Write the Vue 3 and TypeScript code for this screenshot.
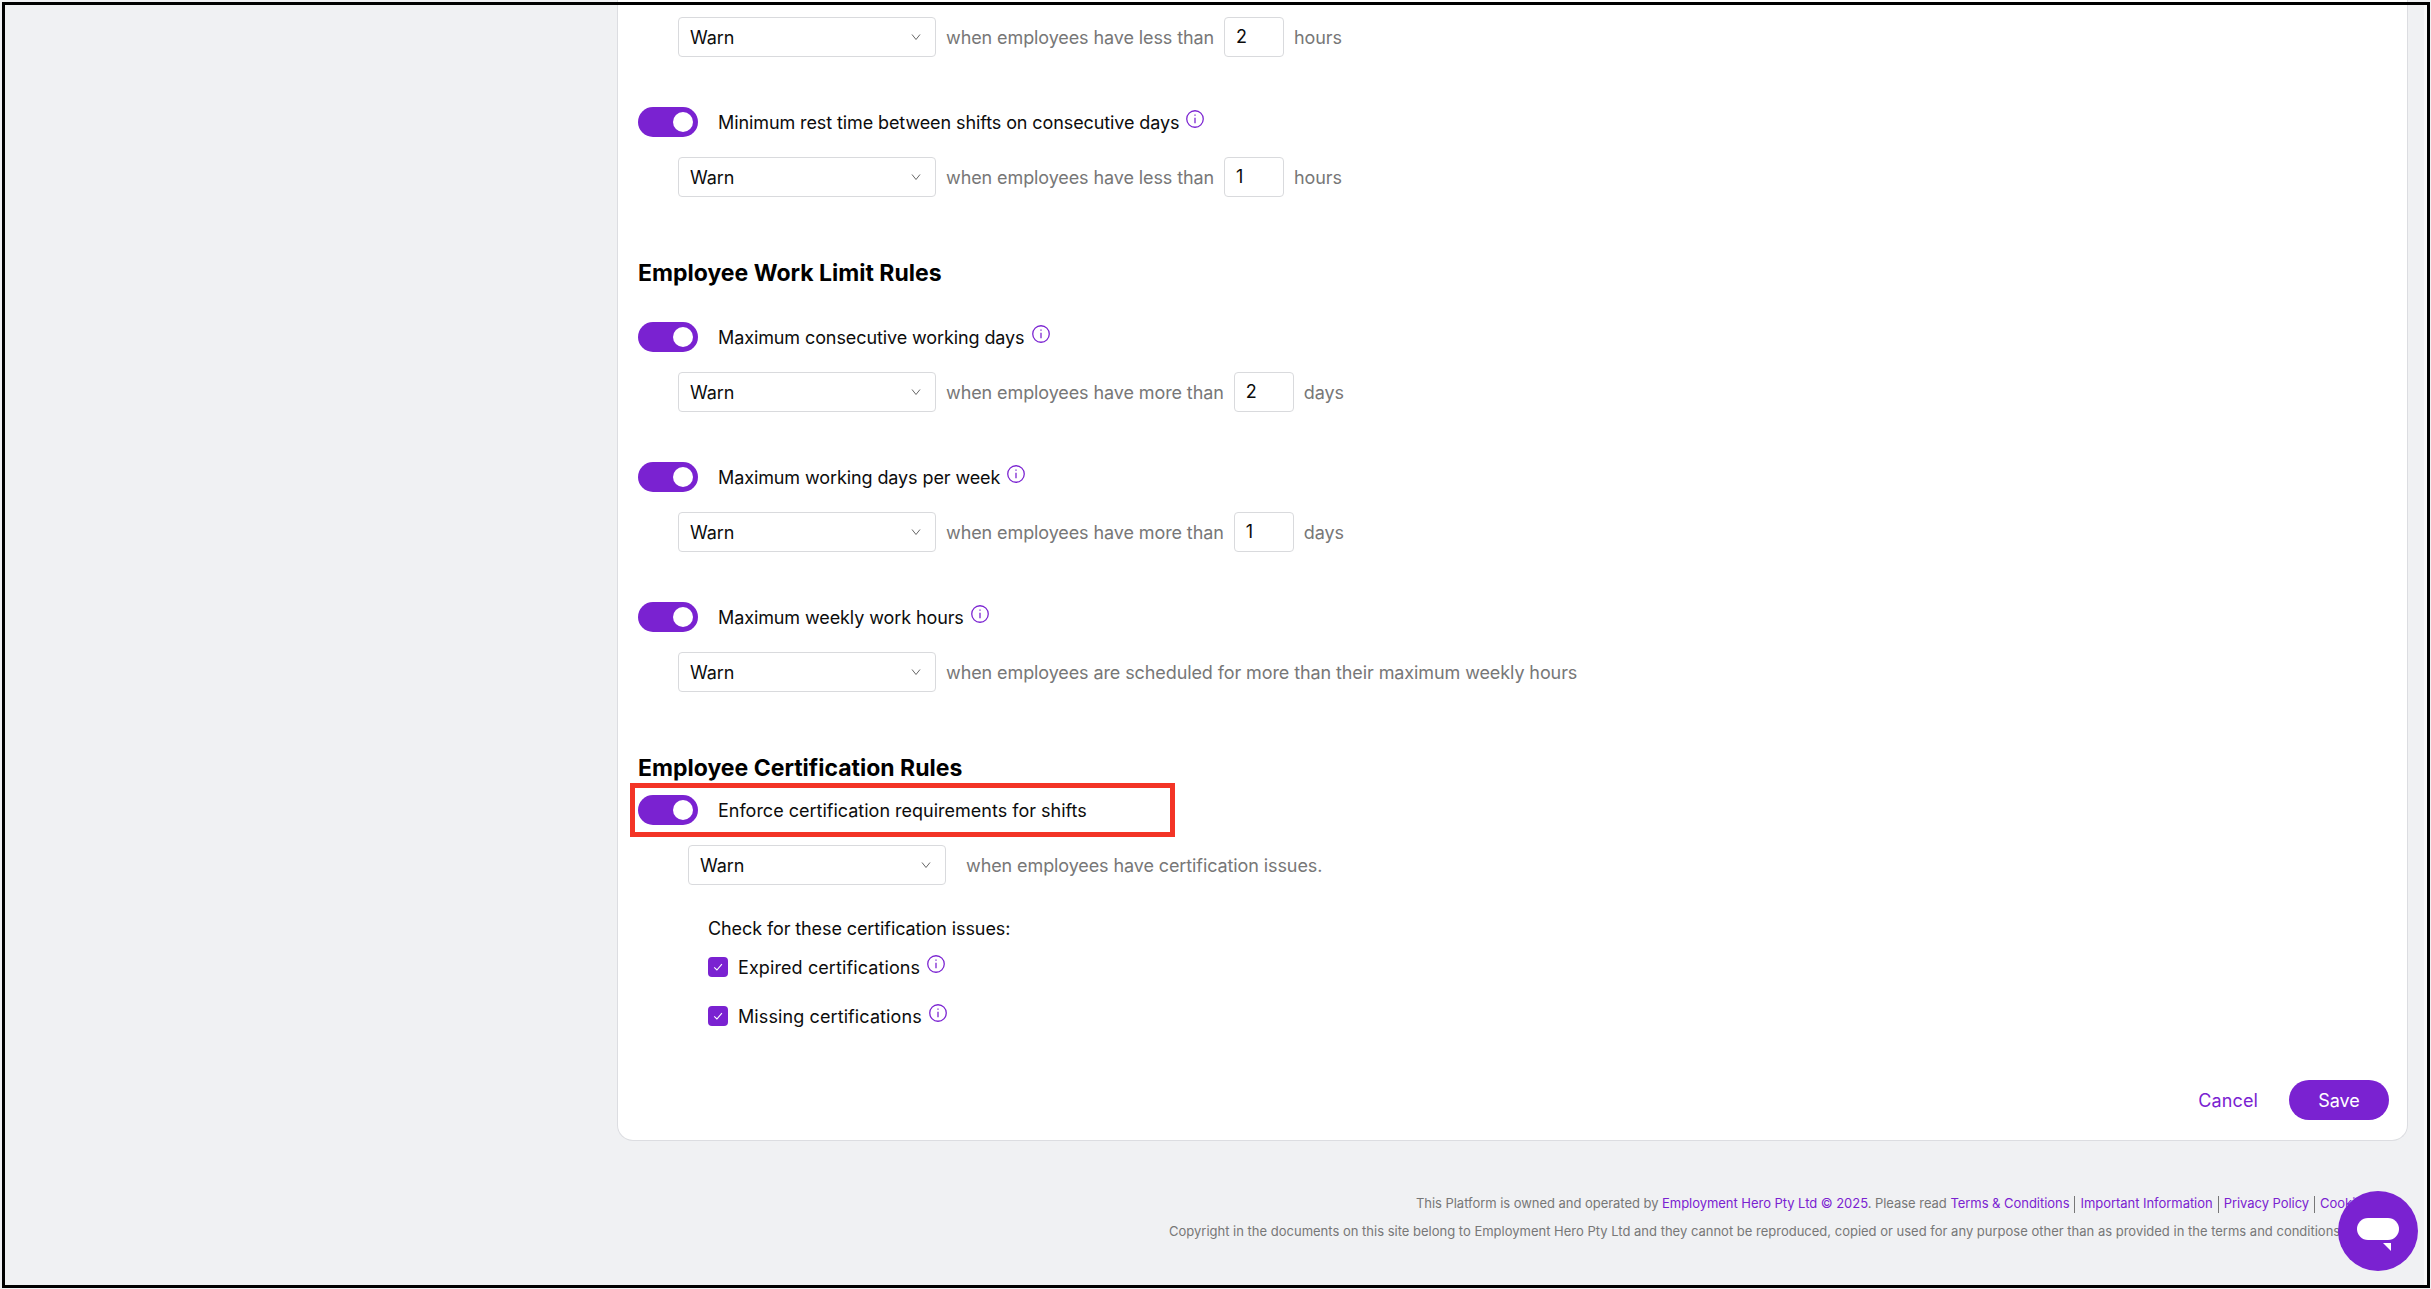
<script setup lang="ts">
interface Rule {
  label: string
  condition: string
  value?: string
  unit?: string
}

const workLimitRules: Rule[] = [
  { label: 'Maximum consecutive working days', condition: 'when employees have more than', value: '2', unit: 'days' },
  { label: 'Maximum working days per week', condition: 'when employees have more than', value: '1', unit: 'days' },
  { label: 'Maximum weekly work hours', condition: 'when employees are scheduled for more than their maximum weekly hours' }
]

const certChecks = ['Expired certifications', 'Missing certifications']
</script>

<template>
  <div class="page">
    <main class="card">
      <div class="action-row first-row">
        <div class="select"><span>Warn</span><svg class="chevron" viewBox="0 0 10 8"><path d="M1 1.5 5 6.5 9 1.5" /></svg></div>
        <span class="condition">when employees have less than</span>
        <div class="number">2</div>
        <span class="condition">hours</span>
      </div>

      <div class="rule">
        <div class="toggle-row">
          <span class="toggle"><i></i></span>
          <span class="rule-label">Minimum rest time between shifts on consecutive days</span>
          <svg class="info" viewBox="0 0 17 17"><circle cx="8.5" cy="8.5" r="7.8" /><path d="M8.5 7.3v5.2M8.5 4.2v1.3" /></svg>
        </div>
        <div class="action-row">
          <div class="select"><span>Warn</span><svg class="chevron" viewBox="0 0 10 8"><path d="M1 1.5 5 6.5 9 1.5" /></svg></div>
          <span class="condition">when employees have less than</span>
          <div class="number">1</div>
          <span class="condition">hours</span>
        </div>
      </div>

      <h2 class="section-title">Employee Work Limit Rules</h2>
      <div v-for="rule in workLimitRules" :key="rule.label" class="rule limit-rule">
        <div class="toggle-row">
          <span class="toggle"><i></i></span>
          <span class="rule-label">{{ rule.label }}</span>
          <svg class="info" viewBox="0 0 17 17"><circle cx="8.5" cy="8.5" r="7.8" /><path d="M8.5 7.3v5.2M8.5 4.2v1.3" /></svg>
        </div>
        <div class="action-row">
          <div class="select"><span>Warn</span><svg class="chevron" viewBox="0 0 10 8"><path d="M1 1.5 5 6.5 9 1.5" /></svg></div>
          <span class="condition">{{ rule.condition }}</span>
          <div v-if="rule.value" class="number">{{ rule.value }}</div>
          <span v-if="rule.unit" class="condition">{{ rule.unit }}</span>
        </div>
      </div>

      <h2 class="section-title cert-title">Employee Certification Rules</h2>
      <div class="toggle-row cert-toggle">
        <span class="toggle"><i></i></span>
        <span class="rule-label">Enforce certification requirements for shifts</span>
        <div class="highlight"></div>
      </div>
      <div class="action-row cert-action">
        <div class="select"><span>Warn</span><svg class="chevron" viewBox="0 0 10 8"><path d="M1 1.5 5 6.5 9 1.5" /></svg></div>
        <span class="condition">when employees have certification issues.</span>
      </div>
      <div class="cert-checks">
        <p class="checks-title">Check for these certification issues:</p>
        <div v-for="check in certChecks" :key="check" class="check-row">
          <span class="checkbox"><svg viewBox="0 0 20 20"><path d="M6.2 10.4 8.9 13 13.9 7.2" /></svg></span>
          <span class="rule-label">{{ check }}</span>
          <svg class="info" viewBox="0 0 17 17"><circle cx="8.5" cy="8.5" r="7.8" /><path d="M8.5 7.3v5.2M8.5 4.2v1.3" /></svg>
        </div>
      </div>

      <div class="card-actions">
        <a class="cancel">Cancel</a>
        <button class="save">Save</button>
      </div>
    </main>

    <footer class="footer">
      <p class="legal">This Platform is owned and operated by <a>Employment Hero Pty Ltd © 2025</a>. Please read <a>Terms &amp; Conditions</a><span class="sep"></span><a>Important Information</a><span class="sep"></span><a>Privacy Policy</a><span class="sep"></span><a>Cookie Policy</a></p>
      <p class="copyright">Copyright in the documents on this site belong to Employment Hero Pty Ltd and they cannot be reproduced, copied or used for any purpose other than as provided in the terms and conditions of use.</p>
    </footer>

    <div class="chat">
      <span class="bubble"></span>
      <span class="tail"></span>
    </div>
    <div class="frame"></div>
  </div>
</template>

<style scoped>
.page {
  position: relative;
  width: 2431px;
  height: 1289px;
  overflow: hidden;
  background: #f0f1f3;
  font-family: Inter, "Open Sans", sans-serif;
  font-size: 18px;
  letter-spacing: -0.1px;
  color: #0c0c0c;
}

.card {
  box-sizing: border-box;
  margin-left: 617px;
  width: 1791px;
  height: 1141px;
  padding: 17px 20px 0;
  background: #fff;
  border: 1px solid #dcdde1;
  border-top: none;
  border-radius: 0 0 16px 16px;
  position: relative;
}

.rule {
  margin-top: 50px;
}

.section-title {
  margin: 61px 0 0;
  font-size: 23px;
  line-height: 30px;
  font-weight: 700;
  letter-spacing: 0;
  color: #000;
}

.limit-rule:nth-of-type(n) {
  margin-top: 50px;
}

.section-title + .limit-rule {
  margin-top: 34px;
}

.cert-title {
  margin-top: 61px;
}

.toggle-row {
  display: flex;
  align-items: center;
  height: 30px;
  position: relative;
}

.toggle {
  flex: none;
  display: flex;
  justify-content: flex-end;
  align-items: center;
  box-sizing: border-box;
  width: 60px;
  height: 30px;
  padding-right: 5px;
  border-radius: 15px;
  background: #7a22d1;
}

.toggle i {
  display: block;
  width: 20px;
  height: 20px;
  border-radius: 50%;
  background: #fff;
}

.rule-label {
  margin-left: 20px;
  white-space: nowrap;
}

.info {
  flex: none;
  width: 18px;
  height: 18px;
  margin: -7px 0 0 7px;
  fill: none;
  stroke: #7a22d1;
  stroke-width: 1.2;
}

.action-row {
  display: flex;
  align-items: center;
  gap: 10px;
  height: 40px;
  margin: 20px 0 0 40px;
}

.first-row {
  margin-top: 0;
}

.select {
  box-sizing: border-box;
  display: flex;
  align-items: center;
  justify-content: space-between;
  width: 258px;
  height: 40px;
  padding: 0 14px 0 11px;
  border: 1px solid #d9dadd;
  border-radius: 4px;
  background: #fff;
}

.chevron {
  width: 10px;
  height: 8px;
  fill: none;
  stroke: #666;
  stroke-width: 1;
}

.number {
  box-sizing: border-box;
  width: 60px;
  height: 40px;
  padding-left: 11px;
  line-height: 38px;
  border: 1px solid #d9dadd;
  border-radius: 4px;
}

.condition {
  color: #777;
  white-space: nowrap;
}

.cert-toggle {
  margin-top: 12px;
}

.cert-toggle .rule-label {
  letter-spacing: 0;
}

.highlight {
  position: absolute;
  left: -8px;
  top: -12px;
  width: 545px;
  height: 54px;
  box-sizing: border-box;
  border: 5px solid #f33426;
}

.cert-action {
  margin: 20px 0 0 50px;
  gap: 20px;
}

.cert-checks {
  margin: 32px 0 0 70px;
}

.checks-title {
  margin: 0;
  line-height: 24px;
}

.check-row {
  display: flex;
  align-items: center;
  height: 20px;
  margin-top: 29px;
}

.checks-title + .check-row {
  margin-top: 16px;
}

.check-row .rule-label {
  margin-left: 10px;
  letter-spacing: 0.1px;
}

.checkbox {
  flex: none;
  width: 20px;
  height: 20px;
  border-radius: 4px;
  background: #7a22d1;
}

.checkbox svg {
  display: block;
  width: 20px;
  height: 20px;
  fill: none;
  stroke: #fff;
  stroke-width: 1.1;
}

.card-actions {
  position: absolute;
  right: 18px;
  bottom: 20px;
  display: flex;
  align-items: center;
  gap: 31px;
}

.cancel {
  color: #7a22d1;
  letter-spacing: 0.1px;
}

.save {
  width: 100px;
  height: 40px;
  border: none;
  border-radius: 20px;
  background: #7a22d1;
  color: #fff;
  font: inherit;
}

.footer {
  box-sizing: border-box;
  width: 2403px;
  padding-top: 48px;
  text-align: right;
  font-size: 13px;
  letter-spacing: 0;
  line-height: 28px;
  color: #777;
  white-space: nowrap;
}

.footer p {
  margin: 0;
}

.footer .legal {
  letter-spacing: -0.04px;
}

.footer .copyright {
  padding-right: 17px;
}

.footer a {
  color: #7a22d1;
}

.sep {
  display: inline-block;
  width: 1px;
  height: 17px;
  margin: 0 5px;
  vertical-align: middle;
  background: #777;
}

.chat {
  position: absolute;
  left: 2338px;
  top: 1191px;
  width: 80px;
  height: 80px;
  border-radius: 50%;
  background: #7a22d1;
}

.bubble {
  position: absolute;
  left: 19px;
  top: 27px;
  width: 42px;
  height: 22px;
  border-radius: 11px;
  background: #fff;
}

.tail {
  position: absolute;
  left: 45px;
  top: 52px;
  width: 8px;
  height: 8px;
  background: #fff;
  clip-path: polygon(0 0, 100% 0, 100% 100%);
}

.frame {
  position: absolute;
  left: 2px;
  top: 2px;
  width: 2428px;
  height: 1286px;
  box-sizing: border-box;
  border: 3px solid #000;
  box-shadow: inset -3px 0 0 #f8f8f9;
  pointer-events: none;
}
</style>
